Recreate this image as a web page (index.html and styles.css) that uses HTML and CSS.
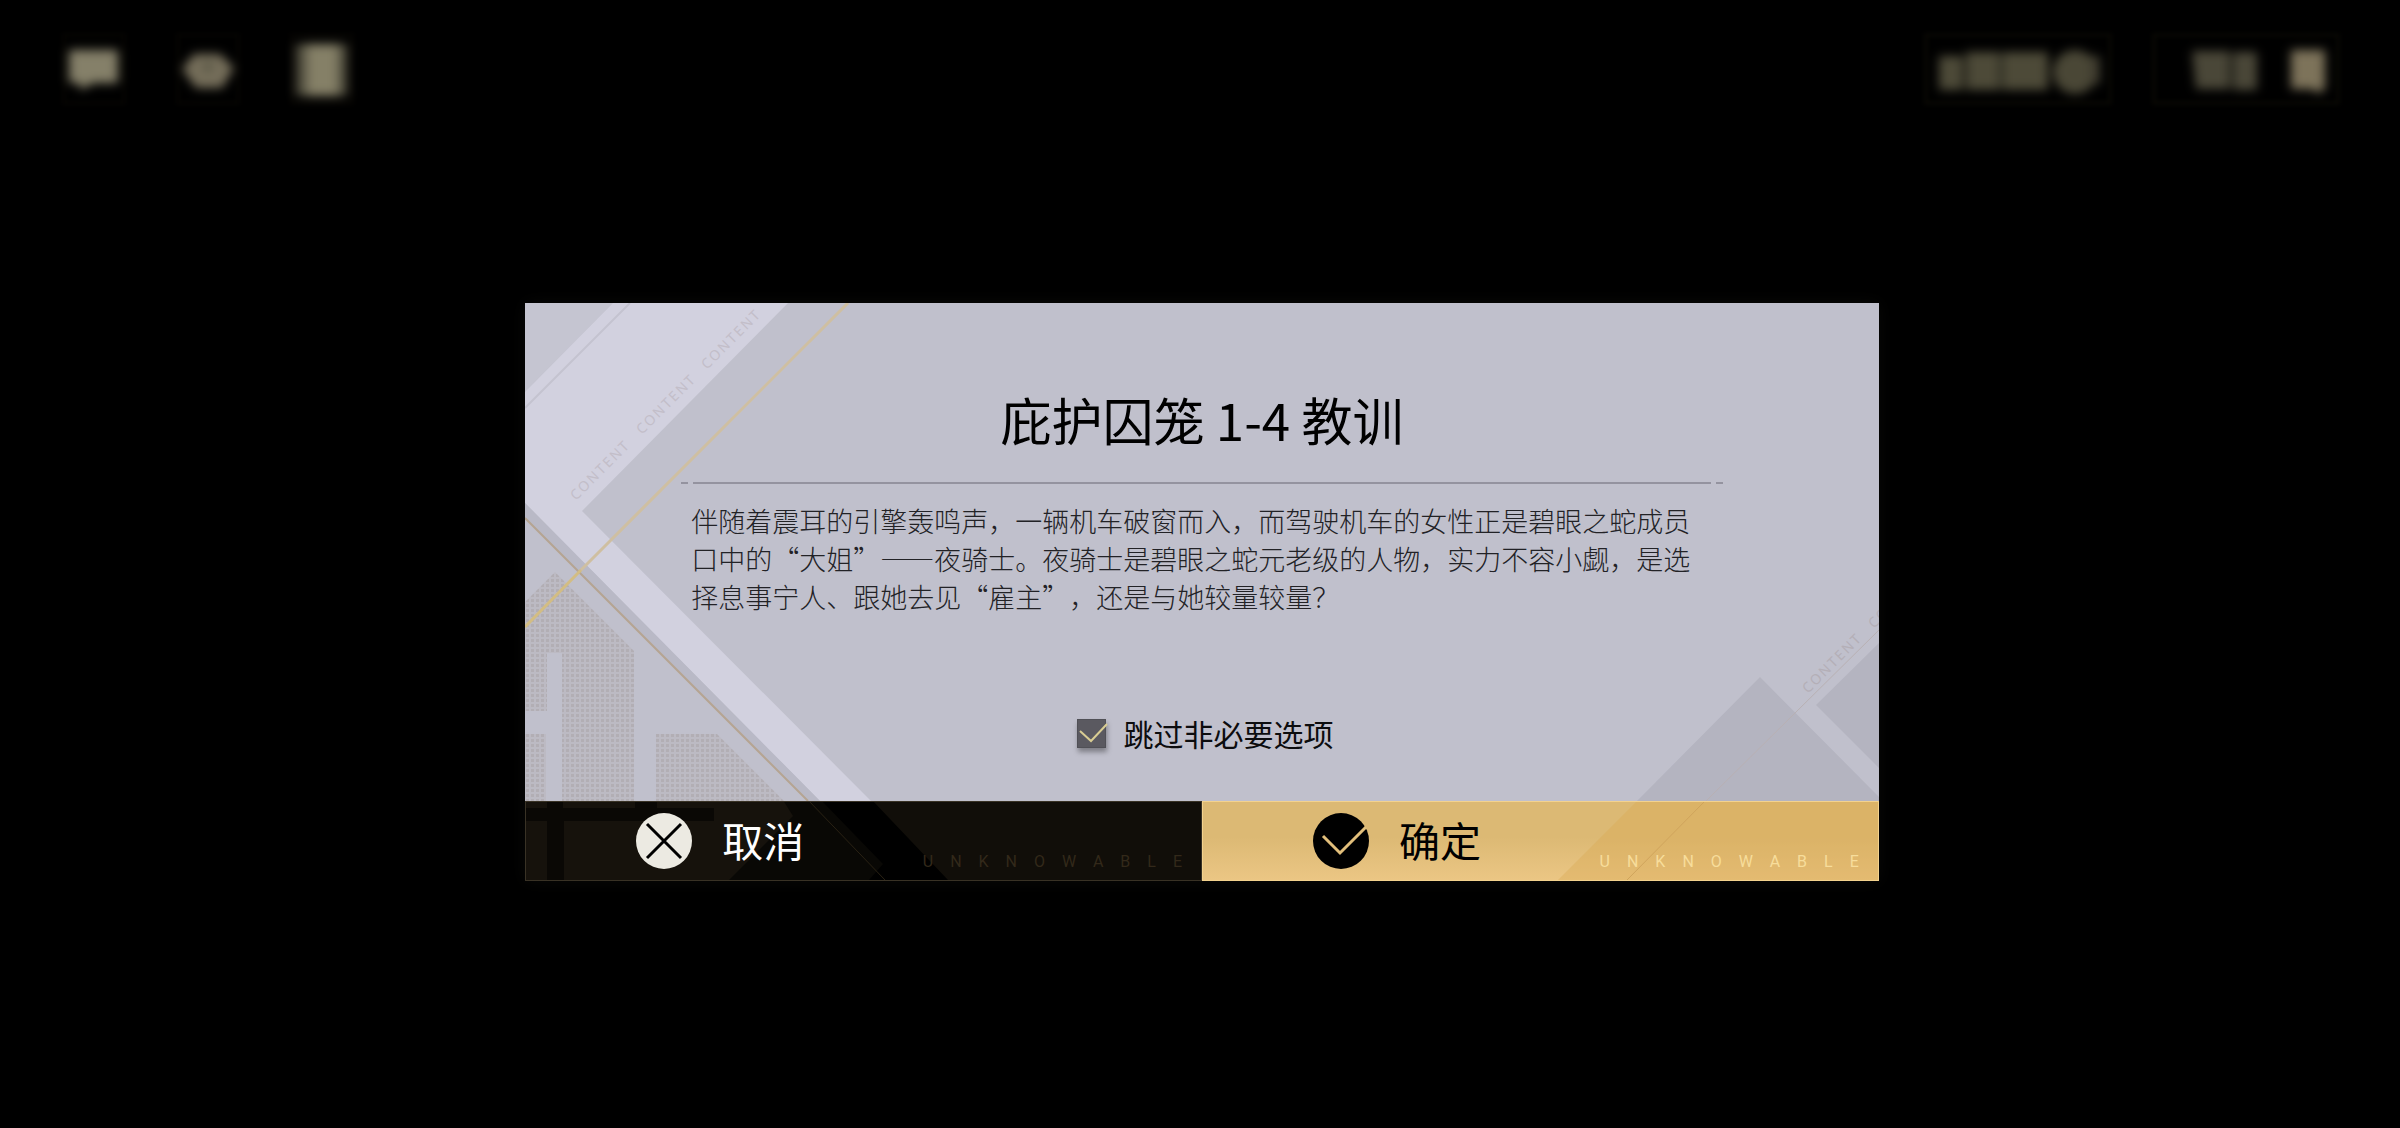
FILE: index.html
```html
<!DOCTYPE html>
<html lang="zh-CN">
<head>
    <meta charset="UTF-8">
    <meta name="viewport" content="width=device-width, initial-scale=1.0">
    <title>庇护囚笼 1-4 教训</title>
    <link rel="stylesheet" href="styles.css">
</head>
<body>
    <header class="topbar">
        <div class="tools">
            <button class="tool" type="button">
                <svg class="haze" width="64" height="64" viewBox="0 0 64 64">
                    <path d="M7 17h49v33H31l-12 7-2-7H7z" fill="#858069"/>
                </svg>
            </button>
            <button class="tool" type="button">
                <svg class="haze" width="64" height="64" viewBox="0 0 64 64">
                    <path d="M6 36 18 21h26l14 14-12 20H20z" fill="#756e5a"/>
                    <circle cx="32" cy="34" r="5" fill="#565443"/>
                </svg>
            </button>
            <button class="tool" type="button">
                <svg class="haze" width="64" height="64" viewBox="0 0 64 64">
                    <path d="M6 11h51v52H6z" fill="#545141"/>
                    <path d="M17 11h31v52H17z" fill="#858067"/>
                </svg>
            </button>
        </div>
        <div class="tools">
            <button class="tool tool-wide" type="button">
                <svg class="haze" width="188" height="72" viewBox="0 0 188 72">
                    <path d="M15 23h24v34H15zM42 19h34v38H42zM78 19h46v38H78z" fill="#4d4a38"/>
                    <circle cx="151" cy="39" r="22" fill="#4a4736"/>
                    <path d="M166 23h10v28h-10z" fill="#3f3c2f"/>
                </svg>
            </button>
            <button class="tool tool-wide" type="button">
                <svg class="haze" width="188" height="72" viewBox="0 0 188 72">
                    <path d="M40 18h38v38H44zM81 19h24v38H81z" fill="#4a4738"/>
                    <path d="M139 17h34v39l-6 4-8-4h-20z" fill="#7d735a"/>
                </svg>
            </button>
        </div>
    </header>

    <main class="stage">
        <section class="dialog">
            <div class="dialog-body">
                <svg class="art art-left" width="400" height="498" viewBox="0 0 400 498">
                    <defs>
                        <pattern id="dots" width="5" height="5" patternUnits="userSpaceOnUse">
                            <rect width="5" height="5" fill="#bcbac3"/>
                            <rect x="1" y="1" width="3" height="3" fill="#b2aeb4"/>
                        </pattern>
                    </defs>
                    <path d="M0 0h88L0 89z" fill="#c5c5d1"/>
                    <path d="M88 0h175L57 208l289 290h-51L0 200V89z" fill="#d2d1df"/>
                    <path d="M0 200 295 498h-13L0 215z" fill="#b9b9c6"/>
                    <path d="M105 0 0 105" stroke="#c4c3d0" stroke-width="2"/>
                    <path d="M30 269l79 79v150H37V350H22v58H0V299zM0 431h21v67H0zM131 431h61l67 67H131z" fill="url(#dots)"/>
                    <path d="M0 215 283 498" stroke="#b5a492" stroke-width="2"/>
                    <path d="M323 0 56 267" stroke="#cfbfa1" stroke-width="3"/>
                    <path d="M56 267 0 324" stroke="#d3bd83" stroke-width="3"/>
                    <g class="strip">
                        <text transform="translate(51 198) rotate(-45)">CONTENT</text>
                        <text transform="translate(117 132) rotate(-45)">CONTENT</text>
                        <text transform="translate(182 67) rotate(-45)">CONTENT</text>
                    </g>
                </svg>
                <svg class="art art-right" width="300" height="200" viewBox="0 0 300 200">
                    <path d="M181 76l119 120v4H58zM237 104l63-62v125z" fill="#b4b4c0"/>
                    <path d="M300 29 127 200" stroke="#b8b0b3" stroke-width="1"/>
                    <g class="strip strip-dim">
                        <text transform="translate(229 93) rotate(-45)">CONTENT</text>
                        <text transform="translate(295 28) rotate(-45)">CONTENT</text>
                    </g>
                </svg>

                <h1 class="title">庇护囚笼 1-4 教训</h1>
                <div class="rule"><span class="rule-dash"></span><span class="rule-line"></span><span class="rule-dash"></span></div>
                <p class="story">伴随着震耳的引擎轰鸣声，一辆机车破窗而入，而驾驶机车的女性正是碧眼之蛇成员口中的“大姐”——夜骑士。夜骑士是碧眼之蛇元老级的人物，实力不容小觑，是选择息事宁人、跟她去见“雇主”，还是与她较量较量？</p>
                <div class="option">
                    <span class="check">
                        <input type="checkbox" id="skip" checked>
                        <svg class="check-mark" width="32" height="29" viewBox="0 0 32 29">
                            <path d="M3 12l11 10L30 5" fill="none" stroke="#d9cd93" stroke-width="2"/>
                        </svg>
                    </span>
                    <label for="skip">跳过非必要选项</label>
                </div>
            </div>

            <div class="actions">
                <button class="action action-cancel" type="button">
                    <svg class="art art-left" width="430" height="80" viewBox="0 0 430 80">
                        <path d="M0 0h300l60 64-16 16H0z" fill="#090805"/>
                        <path d="M0 0h257l10 16-64 64H0z" fill="#16120c"/>
                        <path d="M0 8h188v13H38v59H21V21H0zM21 0h16v8H21zM109 0h22v8h-22z" fill="#0a0805"/>
                        <path d="M295 0h51l76 80h-79l14-16z" fill="#000"/>
                        <path d="M282 0l77 80" stroke="#2a2214" stroke-width="1"/>
                    </svg>
                    <svg class="action-icon" width="56" height="56" viewBox="0 0 56 56">
                        <circle cx="28" cy="28" r="28" fill="#eceae2"/>
                        <path d="M11 11l34 34M45 11 11 45" stroke="#000" stroke-width="3"/>
                    </svg>
                    <span class="action-label">取消</span>
                    <span class="action-tag">UNKNOWABLE</span>
                </button>
                <button class="action action-confirm" type="button">
                    <svg class="art art-right" width="360" height="80" viewBox="0 0 360 80">
                        <path d="M120 0h240v80H40z" fill="#daa955" fill-opacity=".4"/>
                        <path d="M188 0l-79 80" stroke="#cfa45c" stroke-width="1"/>
                    </svg>
                    <svg class="action-icon" width="56" height="56" viewBox="0 0 56 56">
                        <circle cx="28" cy="28" r="28" fill="#000"/>
                        <path d="M10 23l17 17L53 14" fill="none" stroke="#e2bf7b" stroke-width="3"/>
                    </svg>
                    <span class="action-label">确定</span>
                    <span class="action-tag">UNKNOWABLE</span>
                </button>
            </div>
        </section>
    </main>
</body>
</html>
```

FILE: styles.css
```css
* {
    box-sizing: border-box;
}
body {
    display: flex;
    flex-direction: column;
    min-height: 100vh;
    margin: 0;
    background: #000;
    font-family: "Noto Sans CJK SC", "Noto Sans", sans-serif;
}
button {
    margin: 0;
    padding: 0;
    border: none;
    background: none;
    font-family: inherit;
    cursor: pointer;
}

/* top bar, out of focus behind the dialog */
.topbar {
    display: flex;
    justify-content: space-between;
    height: 104px;
    padding: 33px 60px 0 62px;
}
.tools {
    display: flex;
    gap: 50px;
}
.tools:last-child {
    gap: 40px;
}
.tool {
    height: 72px;
    border: 4px solid #050402;
    filter: blur(2px);
    display: flex;
}
.tool svg {
    margin: -4px;
}
.tool-wide {
    border-color: #080703;
}
.haze {
    filter: blur(5px);
}

.stage {
    flex: 1;
    display: flex;
    align-items: center;
    justify-content: center;
    padding: 0 0 48px 4px;
}
.dialog {
    width: 56.4vw;
    min-width: 900px;
    box-shadow: 0 0 16px #0a0a08;
}
.dialog-body {
    position: relative;
    overflow: hidden;
    padding: 84px 156px 46px;
    background: #c0c0cc;
}

.art {
    position: absolute;
    bottom: 0;
}
.art-left {
    left: 0;
}
.art-right {
    right: 0;
}
.strip {
    font-family: "Noto Sans", sans-serif;
    font-size: 14px;
    letter-spacing: 2px;
    fill: #c3bec9;
}
.strip-dim {
    fill: #b4afb7;
}

.title {
    position: relative;
    margin: 0 0 31px;
    font-size: 51px;
    font-weight: 400;
    line-height: 64px;
    text-align: center;
    color: #000;
}
.rule {
    position: relative;
    display: flex;
    gap: 5px;
    margin-bottom: 18px;
}
.rule-dash,
.rule-line {
    height: 2px;
    background: #94939f;
}
.rule-dash {
    width: 7px;
}
.rule-line {
    flex: 1;
}
.story {
    position: relative;
    margin: 0 0 95px;
    padding: 0 10px;
    font-size: 27px;
    font-weight: 300;
    line-height: 38px;
    color: #222226;
    text-spacing-trim: space-all;
}

.option {
    position: relative;
    display: flex;
    align-items: center;
    justify-content: center;
    gap: 18px;
    padding-left: 6px;
    font-size: 30px;
    line-height: 44px;
    color: #0c0c0e;
}
.check {
    position: relative;
    display: flex;
}
.check input {
    appearance: none;
    width: 29px;
    height: 29px;
    margin: 0;
    background: #5a5960;
    border: 1px solid #505056;
    box-shadow: 1px 4px 5px rgba(0, 0, 0, 0.35);
    cursor: pointer;
}
.check-mark {
    position: absolute;
    top: 0;
    left: 0;
    visibility: hidden;
    pointer-events: none;
}
.check input:checked + .check-mark {
    visibility: visible;
}

.actions {
    display: flex;
}
.action {
    position: relative;
    flex: 1;
    display: flex;
    align-items: center;
    gap: 30px;
    height: 80px;
    padding-left: 110px;
    border: 1px solid;
    overflow: hidden;
    font-size: 41px;
}
.action-cancel {
    background: #110e09;
    border-color: #393225;
    color: #fff;
}
.action-confirm {
    background: linear-gradient(#dcb974 45%, #ebc684);
    border-color: #f3d28e;
    color: #000;
}
.action-icon,
.action-label {
    position: relative;
}
.action-label {
    padding-bottom: 4px;
    line-height: 56px;
}
.action-tag {
    position: absolute;
    right: 2px;
    bottom: 8px;
    font-family: Roboto, sans-serif;
    font-size: 16px;
    line-height: 20px;
    letter-spacing: 17px;
}
.action-cancel .action-tag {
    color: #33291a;
}
.action-confirm .action-tag {
    color: #f7dd9b;
}
```
